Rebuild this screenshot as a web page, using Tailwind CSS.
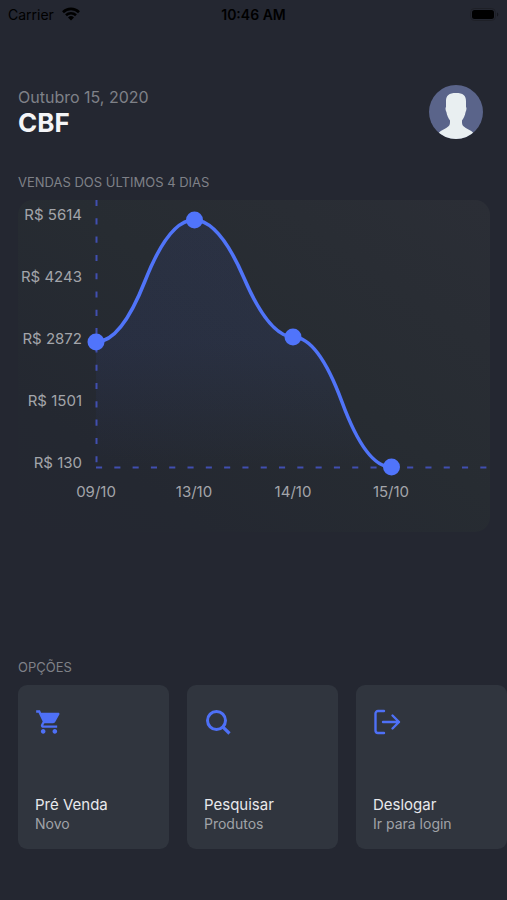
<!DOCTYPE html>
<html lang="pt-BR">
<head>
  <meta charset="UTF-8" />
  <meta name="viewport" content="width=device-width, initial-scale=1.0"/>
  <title>Vendas | CBF</title>
  <script src="https://cdn.jsdelivr.net/npm/@tailwindcss/browser@4"></script>
</head>
<body class="bg-[#242731] font-['Inter','Liberation_Sans',sans-serif] text-[#f4f5f7]">

  <div class="min-h-screen flex flex-col overflow-hidden">

    <!-- Barra de status -->
    <div class="grid grid-cols-3 items-center h-7 px-2 text-[14px] text-black">
      <div class="flex items-center gap-2">
        <span>Carrier</span>
        <svg class="w-[18px] h-[14px]" viewBox="0 0 18 14" fill="none" stroke="currentColor" stroke-width="2.6">
          <path d="M1 5.2a11.4 11.4 0 0 1 16 0" />
          <path d="M4 8.3a7.2 7.2 0 0 1 10 0" />
          <path d="M9 13.4L6 10.4a4.3 4.3 0 0 1 6 0z" fill="currentColor" stroke="none" />
        </svg>
      </div>
      <span class="text-center font-semibold">10:46 AM</span>
      <svg class="w-[29px] h-[13px] justify-self-end" viewBox="0 0 29 13">
        <rect x="0.5" y="0.5" width="25" height="12" rx="4" fill="none" stroke="#1e2027" />
        <rect x="2" y="2" width="22" height="9" rx="2.5" fill="#000" />
        <path d="M27 4.5v4a2.2 2.2 0 0 0 0-4z" fill="#15171d" />
      </svg>
    </div>

    <!-- Cabeçalho -->
    <header class="flex items-center justify-between pl-[18px] pr-6 mt-[57px]">
      <div class="pb-0.5">
        <p class="text-[16px] leading-6 text-[#7f8188]">Outubro 15, 2020</p>
        <h1 class="text-[26px] leading-7 font-bold">CBF</h1>
      </div>
      <svg class="w-[54px] h-[54px] rounded-full" viewBox="0 0 54 54" role="img" aria-label="Avatar">
        <rect width="54" height="54" fill="#5a648a" />
        <path d="M27 8c-7 0-10 2.500-10 8v6c-.8.5-.6 3 .4 5 .6 3.500 2 6.500 3.600 8.500 0 3 0 4.500-1.500 5.800C17 44 12 45 9.500 48L8 54h38l-1.500-6c-2.500-3-7.500-4-10-6.700-1.500-1.300-1.500-2.800-1.500-5.800 1.600-2 3-5 3.600-8.500 1-2 1.200-4.500.4-5v-6C37 10.500 34 8 27 8z" fill="#e9eff1" />
      </svg>
    </header>

    <!-- Gráfico de vendas -->
    <section class="pl-[18px] pr-[17px] mt-[33px]">
      <h2 class="text-[13px] leading-5 text-[#7f8188]">VENDAS DOS ÚLTIMOS 4 DIAS</h2>
      <svg class="w-full mt-2" viewBox="0 0 472 332" font-size="15" fill="#a3a5aa">
        <defs>
          <linearGradient id="card" x1="0" y1="1" x2="1" y2="0">
            <stop offset="0" stop-color="#242731" />
            <stop offset="0.2" stop-color="#242831" />
            <stop offset="0.55" stop-color="#272c32" />
            <stop offset="1" stop-color="#2b2e36" />
          </linearGradient>
          <linearGradient id="area" x1="0" y1="0" x2="0" y2="1">
            <stop offset="0" stop-color="#4866f8" stop-opacity="0.08" />
            <stop offset="0.5" stop-color="#4866f8" stop-opacity="0.08" />
            <stop offset="1" stop-color="#4866f8" stop-opacity="0" />
          </linearGradient>
        </defs>
        <rect width="472" height="332" rx="15" fill="url(#card)" />

        <g text-anchor="end">
          <text x="64" y="20">R$ 5614</text>
          <text x="64" y="82">R$ 4243</text>
          <text x="64" y="144">R$ 2872</text>
          <text x="64" y="206">R$ 1501</text>
          <text x="64" y="268">R$ 130</text>
        </g>
        <g text-anchor="middle">
          <text x="78" y="297">09/10</text>
          <text x="176" y="297">13/10</text>
          <text x="275" y="297">14/10</text>
          <text x="373" y="297">15/10</text>
        </g>

        <path d="M78 142Q103 142 127 81T176 20Q201 20 226 78T275 137Q300 137 324 202T373 267H78z" fill="url(#area)" />
        <g stroke="#414fb0" stroke-width="2" stroke-dasharray="6.1 12.200">
          <path d="M78.500 0V267" />
          <path d="M78 267.500H472" />
        </g>
        <path d="M78 142Q103 142 127 81T176 20Q201 20 226 78T275 137Q300 137 324 202T373 267" fill="none" stroke="#5074f8" stroke-width="3.600" />
        <g fill="#5074fb">
          <circle cx="78" cy="142" r="8.500" />
          <circle cx="176.500" cy="20" r="8.500" />
          <circle cx="275" cy="137" r="8.500" />
          <circle cx="373.500" cy="267" r="8.500" />
        </g>
      </svg>
    </section>

    <!-- Opções -->
    <section class="mt-auto pb-[51px]">
      <h2 class="px-[18px] text-[13px] leading-5 text-[#7f8188]">OPÇÕES</h2>
      <div class="flex gap-[18px] px-[18px] mt-2 overflow-x-auto [scrollbar-width:none]">
        <button class="flex flex-col justify-between shrink-0 w-[151px] h-[164px] rounded-[9px] bg-[#30353e] px-[17px] pt-[23px] pb-4 text-left">
          <svg class="w-7 h-7" viewBox="0 0 24 24" fill="#4e70f6">
            <path d="M7 18c-1.100 0-1.990.9-1.990 2S5.900 22 7 22s2-.9 2-2-.9-2-2-2zM1 2v2h2l3.600 7.590-1.350 2.450c-.16.28-.25.61-.25.96 0 1.100.9 2 2 2h12v-2H7.420c-.14 0-.25-.11-.25-.25l.03-.12.9-1.630h7.450c.75 0 1.410-.41 1.750-1.030l3.580-6.490c.08-.14.12-.31.12-.48 0-.55-.45-1-1-1H5.210l-.94-2H1zm16 16c-1.100 0-1.990.9-1.990 2s.89 2 1.990 2 2-.9 2-2-.9-2-2-2z" />
          </svg>
          <span>
            <span class="block text-[15px] leading-5 text-[#e8e9ec]">Pré Venda</span>
            <span class="block text-[14px] leading-[18px] text-[#a0a3a8]">Novo</span>
          </span>
        </button>
        <button class="flex flex-col justify-between shrink-0 w-[151px] h-[164px] rounded-[9px] bg-[#30353e] px-[17px] pt-[23px] pb-4 text-left">
          <svg class="w-7 h-7" viewBox="0 0 28 28" fill="none" stroke="#4e70f6" stroke-width="3">
            <circle cx="12.500" cy="12.500" r="9" />
            <path d="M18.800 18.800L25.500 25.500" stroke-width="3.200" />
          </svg>
          <span>
            <span class="block text-[15px] leading-5 text-[#e8e9ec]">Pesquisar</span>
            <span class="block text-[14px] leading-[18px] text-[#a0a3a8]">Produtos</span>
          </span>
        </button>
        <button class="flex flex-col justify-between shrink-0 w-[151px] h-[164px] rounded-[9px] bg-[#30353e] px-[17px] pt-[23px] pb-4 text-left">
          <svg class="w-7 h-7" viewBox="0 0 28 28" fill="none" stroke="#4e70f6" stroke-width="2.400" stroke-linecap="round" stroke-linejoin="round">
            <path d="M11 3H5a2.500 2.500 0 0 0-2.500 2.500v17A2.500 2.500 0 0 0 5 25h6" />
            <path d="M10 14H26M19.500 7.500L26 14l-6.500 6.500" />
          </svg>
          <span>
            <span class="block text-[15px] leading-5 text-[#e8e9ec]">Deslogar</span>
            <span class="block text-[14px] leading-[18px] text-[#a0a3a8]">Ir para login</span>
          </span>
        </button>
      </div>
    </section>

  </div>

</body>
</html>
